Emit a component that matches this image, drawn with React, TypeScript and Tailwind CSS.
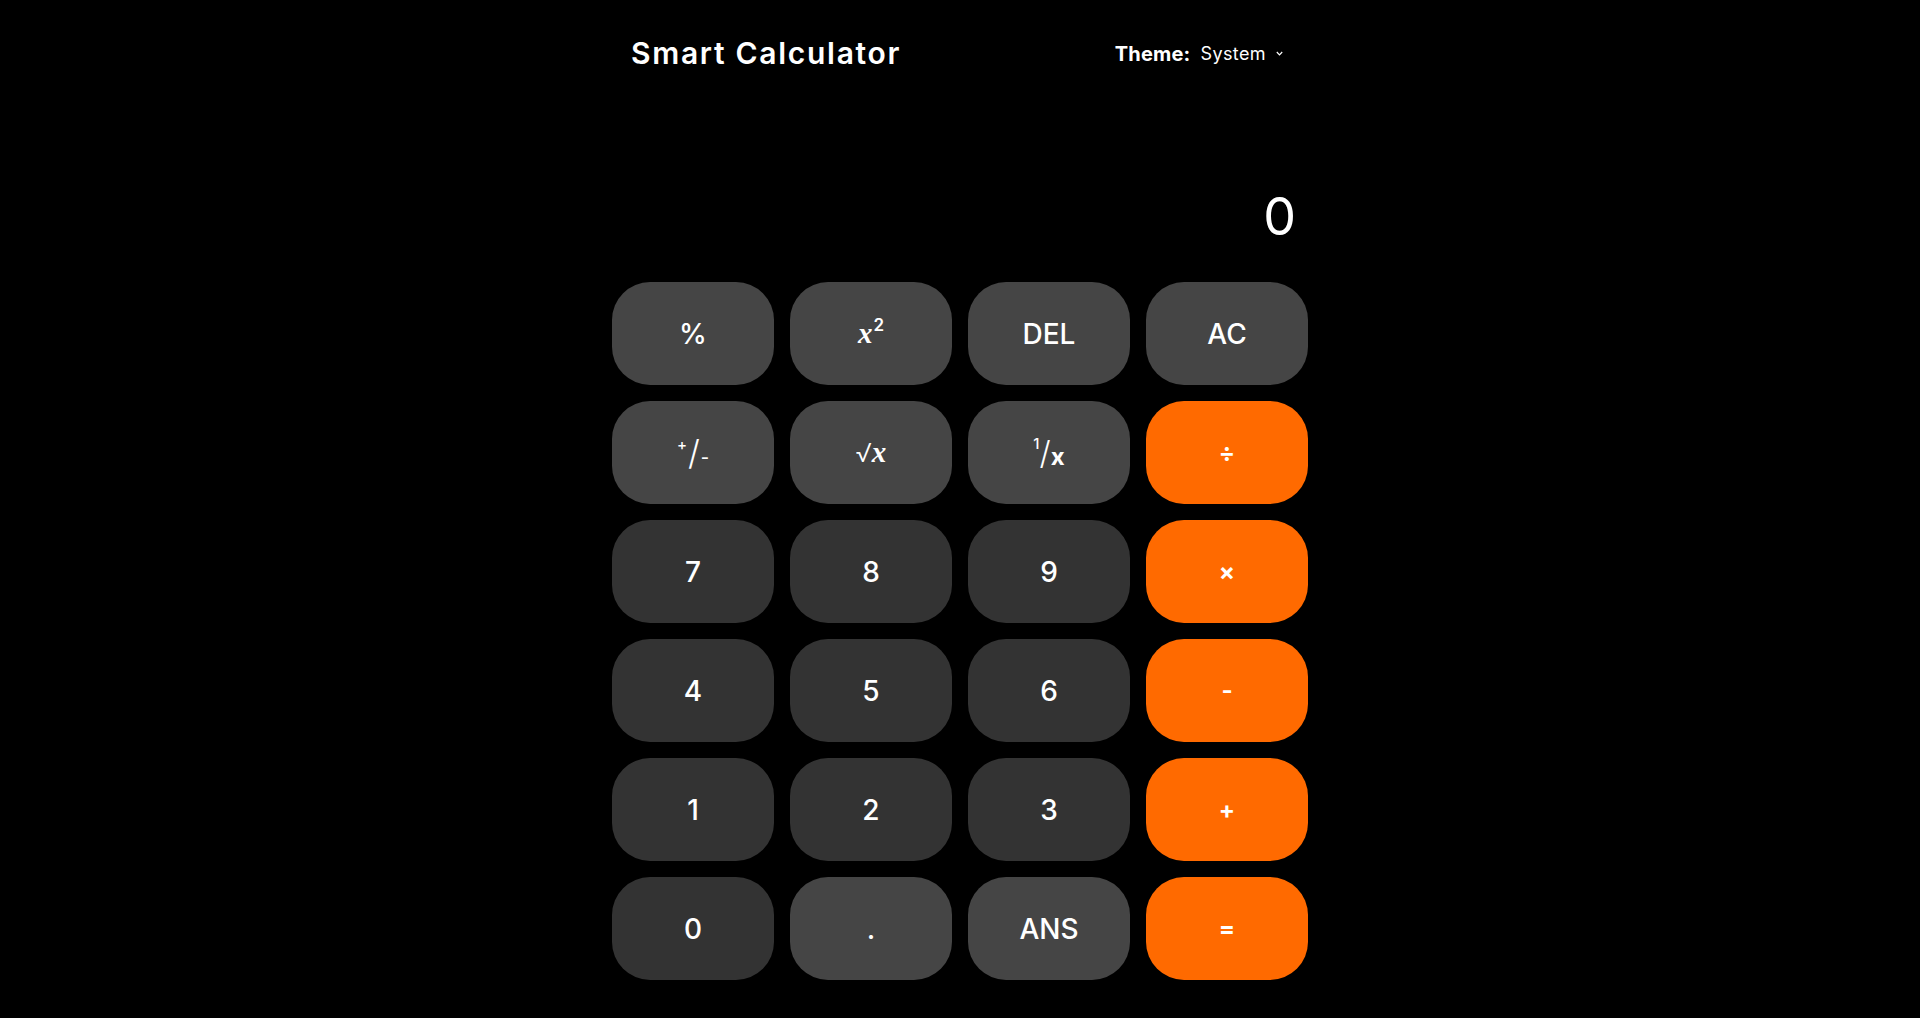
import React from 'react';

type Tone = 'fn' | 'num' | 'op';

const toneClass: Record<Tone, string> = {
  fn: 'bg-[#454545]',
  num: 'bg-[#333333]',
  op: 'bg-[#ff6a00]',
};

const Key: React.FC<{ tone: Tone; children: React.ReactNode; bold?: boolean }> = ({ tone, children, bold }) => (
  <button
    className={`h-[103px] rounded-[38px] flex items-center justify-center text-white ${toneClass[tone]} ${bold ? 'text-[24px] font-bold' : 'text-[28px] font-medium'}`}
  >
    {children}
  </button>
);

const serifX = 'font-["Liberation_Serif",serif] italic';

export default function App() {
  return (
    <div className="min-h-screen bg-black flex justify-center font-['Inter','Liberation_Sans',sans-serif]">
      <div className="w-[696px] flex flex-col">
        <header className="h-[107px] flex items-center justify-between pl-[19px] pr-[25px]">
          <h1 className="text-[30px] font-semibold text-white tracking-[1.7px]">Smart Calculator</h1>
          <div className="flex items-center text-white">
            <span className="text-[20px] font-bold tracking-[0.2px]">Theme:</span>
            <span className="ml-[10px] text-[18px] tracking-[0.4px]">System</span>
            <svg className="ml-[10px]" width="7" height="5" viewBox="0 0 7 5" fill="none">
              <path d="M0.8 1 L3.5 3.8 L6.2 1" stroke="white" strokeWidth="1.2" />
            </svg>
          </div>
        </header>

        <div className="h-[175px] flex flex-col justify-end items-end pb-[39px] pr-[12px]">
          <div className="text-[52px] leading-none text-white">0</div>
        </div>

        <div className="grid grid-cols-4 gap-x-4 gap-y-4">
          <Key tone="fn">%</Key>
          <Key tone="fn">
            <span className={`${serifX} font-bold text-[29px]`}>x</span>
            <span className="relative -top-[8px] ml-[1px] text-[17px] font-semibold">2</span>
          </Key>
          <Key tone="fn">DEL</Key>
          <Key tone="fn">AC</Key>

          <Key tone="fn">
            <span className="relative -top-[7px] text-[15px]">+</span>
            <span className="text-[34px] font-light mx-[1px]">/</span>
            <span className="relative top-[5px] text-[18px]">-</span>
          </Key>
          <Key tone="fn">
            <span className="text-[26px] font-light">√</span>
            <span className={`${serifX} font-bold text-[29px]`}>x</span>
          </Key>
          <Key tone="fn">
            <span className="relative -top-[8px] text-[15px]">1</span>
            <span className="text-[32px] font-light">/</span>
            <span className="relative top-[4px] text-[24px] font-bold">x</span>
          </Key>
          <Key tone="op" bold>÷</Key>

          <Key tone="num">7</Key>
          <Key tone="num">8</Key>
          <Key tone="num">9</Key>
          <Key tone="op" bold>×</Key>

          <Key tone="num">4</Key>
          <Key tone="num">5</Key>
          <Key tone="num">6</Key>
          <Key tone="op" bold>-</Key>

          <Key tone="num">1</Key>
          <Key tone="num">2</Key>
          <Key tone="num">3</Key>
          <Key tone="op" bold>+</Key>

          <Key tone="num">0</Key>
          <Key tone="fn">.</Key>
          <Key tone="fn">ANS</Key>
          <Key tone="op" bold>=</Key>
        </div>
      </div>
    </div>
  );
}
